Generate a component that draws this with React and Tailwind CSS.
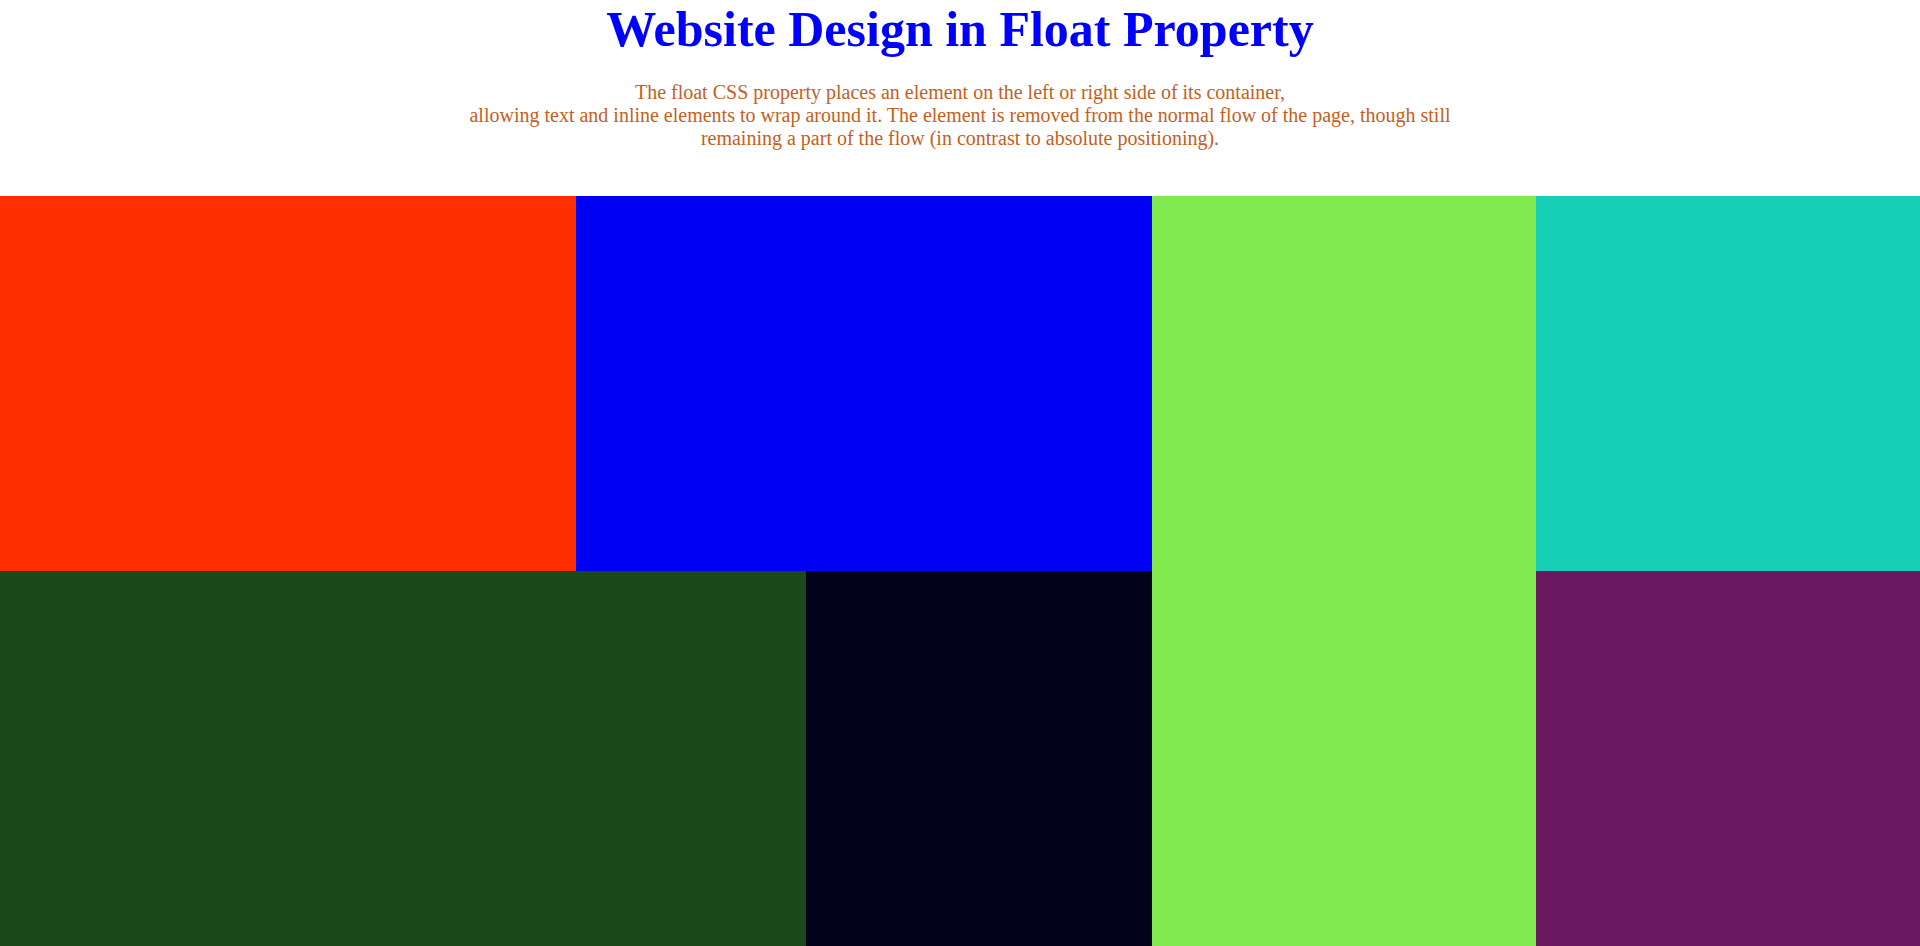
export default function App() {
  return (
    <div className="w-[1920px] h-[946px] bg-white overflow-hidden flex flex-col" style={{ fontFamily: '"Liberation Serif", "Times New Roman", serif' }}>
      <div className="h-[196px] flex flex-col items-center">
        <h1 className="text-[50px] font-bold text-[#0000ff] leading-[58px] mt-0">Website Design in Float Property</h1>
        <p className="w-[1000px] mt-[23px] text-center text-[20px] leading-[23px] text-[#c4601c]">
          The float CSS property places an element on the left or right side of its container,<br />
          allowing text and inline elements to wrap around it. The element is removed from the normal flow of the page, though still remaining a part of the flow (in contrast to absolute positioning).
        </p>
      </div>
      <div className="flex h-[750px]">
        <div className="w-[1152px] flex flex-col">
          <div className="flex h-[375px]">
            <div className="w-[576px] bg-[#ff2e00]"></div>
            <div className="w-[576px] bg-[#0000f5]"></div>
          </div>
          <div className="flex h-[375px]">
            <div className="w-[806px] bg-[#1b4a1a]"></div>
            <div className="w-[346px] bg-[#02021a]"></div>
          </div>
        </div>
        <div className="w-[384px] bg-[#80ea4e]"></div>
        <div className="w-[384px] flex flex-col">
          <div className="h-[375px] bg-[#17cfb7]"></div>
          <div className="h-[375px] bg-[#6a1960]"></div>
        </div>
      </div>
    </div>
  );
}
